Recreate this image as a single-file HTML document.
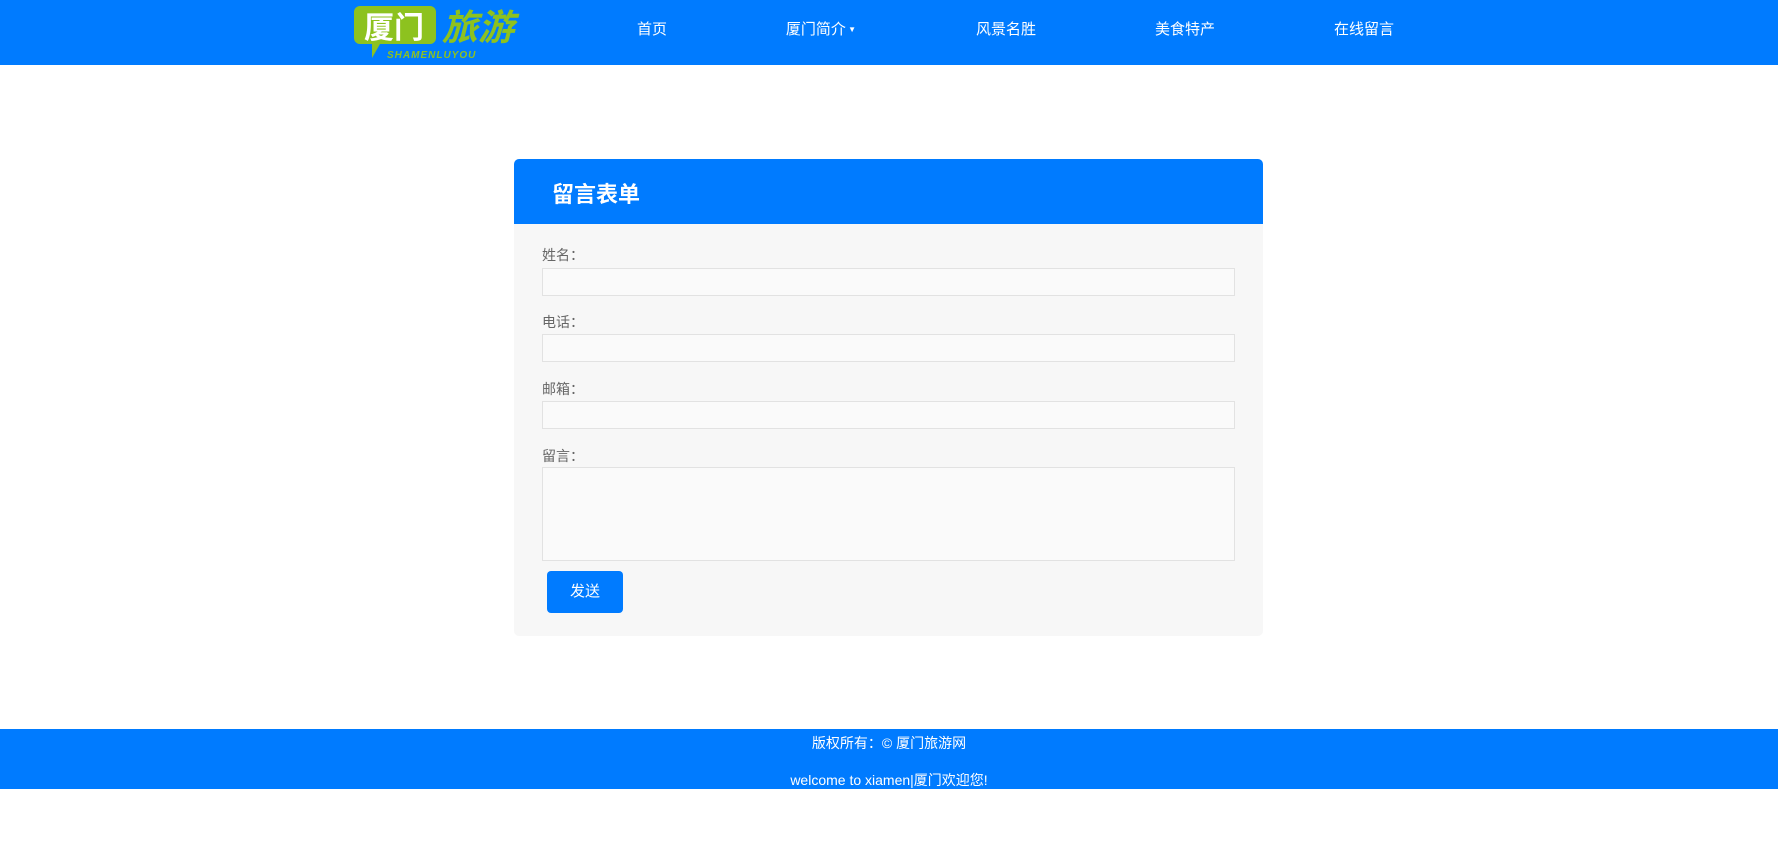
<!DOCTYPE html>
<html><head><meta charset="utf-8"><style>
*{box-sizing:border-box;margin:0;padding:0}
body{width:1778px;height:862px;background:#fff;font-family:"Liberation Sans","Noto Sans CJK SC",sans-serif;position:relative;overflow:hidden}
.nav{position:absolute;left:0;top:0;width:1778px;height:65px;background:#007bff}
.nav a{position:absolute;top:18px;color:#fff;font-size:15px;transform:translateX(-50%);white-space:nowrap}
.logo{position:absolute;left:354px;top:2px;width:180px;height:60px}
.card{position:absolute;left:514px;top:159px;width:749px;height:477px;background:#f7f7f7;border-radius:5px;overflow:hidden}
.ch{height:65px;background:#007bff;color:#fff;font-size:22px;font-weight:bold;padding:18px 0 0 38px}
.lb{position:absolute;left:542px;font-size:14px;color:#666}
.in{position:absolute;left:542px;width:693px;background:#fafafa;border:1px solid #e2e2e2}
.btn{position:absolute;left:547px;top:571px;width:76px;height:42px;background:#007bff;border-radius:4px;color:#fff;font-size:15px;text-align:center;line-height:42px}
.ft{position:absolute;left:0;top:729px;width:1778px;height:60px;background:#007bff;color:#fff;font-size:14px;text-align:center}
</style></head><body>
<div class="nav">
<svg class="logo" viewBox="0 0 180 60">
<path d="M6 4 h70 a6 6 0 0 1 6 6 v26 a6 6 0 0 1 -6 6 h-50 l-8 14 v-14 h-12 a6 6 0 0 1 -6 -6 v-26 a6 6 0 0 1 6 -6z" fill="#8dc21f"/>
<text x="10" y="36" font-size="30" font-weight="bold" fill="#fff" font-family="Noto Sans CJK SC">厦门</text>
<text x="88" y="38" font-size="36" font-weight="bold" fill="#8dc21f" font-family="Noto Sans CJK SC" font-style="italic">旅游</text>
<text x="33" y="56" font-size="10" font-weight="bold" fill="#8dc21f" font-style="italic" letter-spacing="1">SHAMENLUYOU</text>
</svg>
<a style="left:652px">首页</a>
<a style="left:821px">厦门简介<span style="font-size:8px;vertical-align:2px"> ▼</span></a>
<a style="left:1006px">风景名胜</a>
<a style="left:1185px">美食特产</a>
<a style="left:1364px">在线留言</a>
</div>
<div class="card"><div class="ch">留言表单</div></div>
<div class="lb" style="top:245px">姓名：</div>
<div class="in" style="top:268px;height:28px"></div>
<div class="lb" style="top:312px">电话：</div>
<div class="in" style="top:334px;height:28px"></div>
<div class="lb" style="top:379px">邮箱：</div>
<div class="in" style="top:401px;height:28px"></div>
<div class="lb" style="top:446px">留言：</div>
<div class="in" style="top:467px;height:94px"></div>
<div class="btn">发送</div>
<div class="ft"><div style="position:absolute;width:100%;top:4px">版权所有：© 厦门旅游网</div><div style="position:absolute;width:100%;top:41px">welcome to xiamen|厦门欢迎您!</div></div>
</body></html>
